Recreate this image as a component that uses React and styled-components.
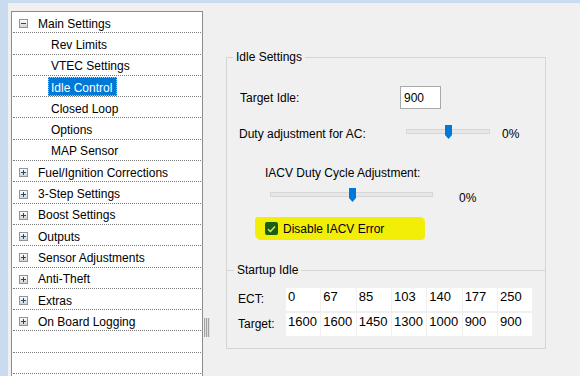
import React from 'react';
import styled, { createGlobalStyle } from 'styled-components';

const Global = createGlobalStyle`
  html, body { margin: 0; padding: 0; background: #f0f0f0; }
  body {
    font-family: "Liberation Sans", Arial, sans-serif;
    font-size: 12px;
    color: #000;
    overflow: hidden;
  }
`;

const Window = styled.div`
  width: 580px;
  height: 376px;
  box-sizing: border-box;
  border-top: 3px solid #c9dbee;
  border-left: 8px solid #c9dbee;
  background: #f0f0f0;
  display: flex;
  align-items: flex-start;
  overflow: hidden;
`;

const Tree = styled.div`
  flex: none;
  margin: 8px 0 0 3px;
  width: 192px;
  height: 400px;
  box-sizing: border-box;
  border: 1px solid #8c8c8c;
  background: #fff;
  padding: 0 1px;
`;

const TreeRow = styled.div`
  height: 21.31px;
  box-sizing: border-box;
  border-bottom: 1px dotted #7c7c7c;
  display: flex;
  align-items: stretch;
  padding-top: 1px;
  padding-left: ${(p) => (p.$child ? 35 : 6)}px;
`;

const IconBox = styled.span`
  display: flex;
  align-items: center;
  padding-top: 2px;
  margin-right: 7px;
`;

const TreeLabel = styled.span`
  display: flex;
  align-items: center;
  padding: 2px 4px 0 2px;
  border: 1px dotted ${(p) => (p.$selected ? '#9fcbf2' : 'transparent')};
  background: ${(p) => (p.$selected ? '#0078d7' : 'transparent')};
  color: ${(p) => (p.$selected ? '#fff' : '#000')};
  white-space: nowrap;
`;

const Splitter = styled.div`
  flex: none;
  width: 10px;
  padding: 315px 0 0 1px;
  box-sizing: border-box;
`;

const Grip = styled.div`
  width: 6px;
  height: 19px;
  background: repeating-linear-gradient(90deg, #a3a3a3 0 1px, #dedede 1px 2px);
`;

const Content = styled.div`
  flex: 1;
  padding: 47px 0 0 13px;
`;

const Group = styled.fieldset`
  margin: 0;
  padding: 0;
  width: 320px;
  box-sizing: border-box;
  border: 1px solid #d5d5d5;
  min-inline-size: 0;
`;

const SubGroup = styled.fieldset`
  margin: ${(p) => p.$mt}px 0 0;
  padding: 0 0 12px 11px;
  border: 0;
  border-top: 1px solid #d5d5d5;
  min-inline-size: 0;
`;

const Legend = styled.legend`
  margin-left: ${(p) => p.$offset}px;
  padding: 0 3px;
  line-height: 14px;
  font-size: 12px;
`;

const FieldRow = styled.div`
  display: flex;
  align-items: ${(p) => p.$align || 'center'};
  height: ${(p) => p.$h}px;
  margin-top: ${(p) => p.$mt}px;
  padding-left: ${(p) => p.$pl}px;
`;

const Label = styled.span`
  width: ${(p) => (p.$w ? `${p.$w}px` : 'auto')};
  flex: none;
  line-height: 14px;
  white-space: nowrap;
`;

const TextInput = styled.div`
  width: 41px;
  height: 23px;
  box-sizing: border-box;
  border: 1px solid #a9a9a9;
  background: #fff;
  padding-left: 3px;
  display: flex;
  align-items: center;
`;

const SliderBox = styled.div`
  position: relative;
  flex: none;
  width: ${(p) => p.$w}px;
  height: 14px;
  margin-bottom: ${(p) => p.$mb || 0}px;
`;

const Track = styled.div`
  position: absolute;
  left: 0;
  right: 0;
  top: 4px;
  height: 5px;
  box-sizing: border-box;
  background: #e7e7e7;
  border: 1px solid #d6d6d6;
`;

const Thumb = styled.svg`
  position: absolute;
  top: 0;
  left: 50%;
  margin-left: -3px;
`;

const Percent = styled.span`
  line-height: 14px;
  margin-left: ${(p) => p.$ml}px;
  margin-top: ${(p) => p.$mt || 0}px;
`;

const Highlight = styled.div`
  display: flex;
  align-items: center;
  margin: 15px 0 0 28px;
  width: 170px;
  height: 23px;
  padding-left: 10px;
  box-sizing: border-box;
  background: #f3ee08;
  border-radius: 3px 5px 4px 6px;
`;

const Check = styled.span`
  width: 13px;
  height: 13px;
  border-radius: 2px;
  background: #1b5e17;
  display: flex;
  align-items: center;
  justify-content: center;
  margin-right: 5px;
`;

const Table = styled.div`
  display: grid;
  grid-template-columns: 47px repeat(7, 34.33px);
  column-gap: 1px;
  row-gap: 2.3px;
  grid-auto-rows: 23px;
  margin-top: 11px;
`;

const RowLabel = styled.span`
  padding-top: 4px;
  line-height: 14px;
`;

const Cell = styled.div`
  background: #fff;
  font-size: 13px;
  line-height: 15px;
  padding: 1px 0 0 2px;
  white-space: nowrap;
  overflow: hidden;
`;

const ExpandIcon = ({ open }) => (
  <svg width="9" height="9" viewBox="0 0 9 9">
    <defs>
      <linearGradient id="expGrad" x1="0" y1="0" x2="0" y2="1">
        <stop offset="0" stopColor="#ffffff" />
        <stop offset="1" stopColor="#d2d2d2" />
      </linearGradient>
    </defs>
    <rect x="0.5" y="0.5" width="8" height="8" fill="url(#expGrad)" stroke="#939393" />
    <path d="M2 4.5h5" stroke="#26408a" />
    {!open && <path d="M4.5 2v5" stroke="#26408a" />}
  </svg>
);

const SliderThumb = () => (
  <Thumb width="7" height="14" viewBox="0 0 7 14">
    <path d="M0 0H7V10L3.5 14L0 10Z" fill="#0078d7" />
  </Thumb>
);

const treeItems = [
  { label: 'Main Settings', parent: true, open: true },
  { label: 'Rev Limits' },
  { label: 'VTEC Settings' },
  { label: 'Idle Control', selected: true },
  { label: 'Closed Loop' },
  { label: 'Options' },
  { label: 'MAP Sensor' },
  { label: 'Fuel/Ignition Corrections', parent: true },
  { label: '3-Step Settings', parent: true },
  { label: 'Boost Settings', parent: true },
  { label: 'Outputs', parent: true },
  { label: 'Sensor Adjustments', parent: true },
  { label: 'Anti-Theft', parent: true },
  { label: 'Extras', parent: true },
  { label: 'On Board Logging', parent: true },
  { empty: true },
  { empty: true },
  { empty: true },
];

const ect = ['0', '67', '85', '103', '140', '177', '250'];
const target = ['1600', '1600', '1450', '1300', '1000', '900', '900'];

export default function App() {
  return (
    <>
      <Global />
      <Window>
        <Tree>
          {treeItems.map((it, i) =>
            it.empty ? (
              <TreeRow key={i} />
            ) : (
              <TreeRow key={i} $child={!it.parent}>
                {it.parent && (
                  <IconBox>
                    <ExpandIcon open={it.open} />
                  </IconBox>
                )}
                <TreeLabel $selected={it.selected}>{it.label}</TreeLabel>
              </TreeRow>
            )
          )}
        </Tree>
        <Splitter>
          <Grip />
        </Splitter>
        <Content>
          <Group>
            <Legend $offset={6}>Idle Settings</Legend>
            <FieldRow $h={23} $mt={22} $pl={13}>
              <Label $w={160}>Target Idle:</Label>
              <TextInput>900</TextInput>
            </FieldRow>
            <FieldRow $h={22} $mt={14} $pl={12}>
              <Label $w={167}>Duty adjustment for AC:</Label>
              <SliderBox $w={84} $mb={4}>
                <Track />
                <SliderThumb />
              </SliderBox>
              <Percent $ml={12}>0%</Percent>
            </FieldRow>
            <FieldRow $h={14} $mt={21} $pl={38}>
              <Label>IACV Duty Cycle Adjustment:</Label>
            </FieldRow>
            <FieldRow $h={14} $mt={8} $pl={43} $align="flex-start">
              <SliderBox $w={163}>
                <Track />
                <SliderThumb />
              </SliderBox>
              <Percent $ml={26} $mt={3}>0%</Percent>
            </FieldRow>
            <Highlight>
              <Check>
                <svg width="9" height="8" viewBox="0 0 9 8">
                  <path d="M1 4.2L3.4 6.5L8 1.5" fill="none" stroke="#d6ef6a" strokeWidth="1.4" />
                </svg>
              </Check>
              <Label>Disable IACV Error</Label>
            </Highlight>
            <SubGroup $mt={23}>
              <Legend $offset={-4}>Startup Idle</Legend>
              <Table>
                <RowLabel>ECT:</RowLabel>
                {ect.map((v, i) => (
                  <Cell key={'e' + i}>{v}</Cell>
                ))}
                <RowLabel>Target:</RowLabel>
                {target.map((v, i) => (
                  <Cell key={'t' + i}>{v}</Cell>
                ))}
              </Table>
            </SubGroup>
          </Group>
        </Content>
      </Window>
    </>
  );
}
